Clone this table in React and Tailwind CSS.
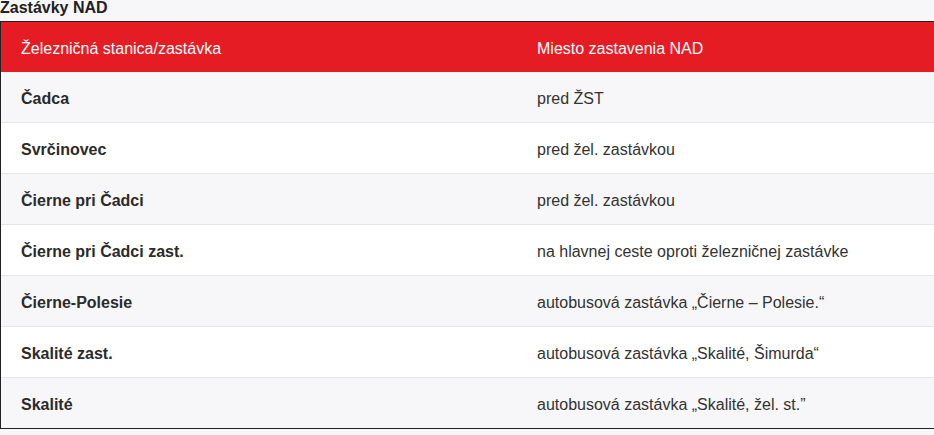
import React from 'react';

const rows = [
  ['Čadca', 'pred ŽST'],
  ['Svrčinovec', 'pred žel. zastávkou'],
  ['Čierne pri Čadci', 'pred žel. zastávkou'],
  ['Čierne pri Čadci zast.', 'na hlavnej ceste oproti železničnej zastávke'],
  ['Čierne-Polesie', 'autobusová zastávka „Čierne – Polesie.“'],
  ['Skalité zast.', 'autobusová zastávka „Skalité, Šimurda“'],
  ['Skalité', 'autobusová zastávka „Skalité, žel. st.”'],
];

export default function App() {
  return (
    <div className="w-[934px] h-[435px] overflow-hidden bg-[#f7f7f9] text-[#333] font-['Liberation_Sans',Arial,sans-serif]">
      {/* Title */}
      <h2 className="text-[16px] font-bold leading-[16px] text-[#222]">Zastávky NAD</h2>

      {/* Table */}
      <div className="mt-[5px] w-[950px] border border-[#222] text-[16px]">
        <div className="grid grid-cols-[516px_1fr] bg-[#e51c24] text-white h-[50px] items-center">
          <div className="pl-[20px] pt-[4px]">Železničná stanica/zastávka</div>
          <div className="pl-[20px] pt-[4px]">Miesto zastavenia NAD</div>
        </div>
        {rows.map(([stop, place], idx) => (
          <div
            key={idx}
            className={`grid grid-cols-[516px_1fr] items-center h-[50px] box-content ${idx > 0 ? 'border-t border-[#e6e6e9]' : ''} ${idx % 2 === 0 ? 'bg-[#f7f7f9]' : 'bg-white'}`}
          >
            <div className="pl-[20px] pt-[4px] font-bold text-[#2b2b2b]">{stop}</div>
            <div className="pl-[20px] pt-[4px] text-[#333]">{place}</div>
          </div>
        ))}
      </div>
    </div>
  );
}
